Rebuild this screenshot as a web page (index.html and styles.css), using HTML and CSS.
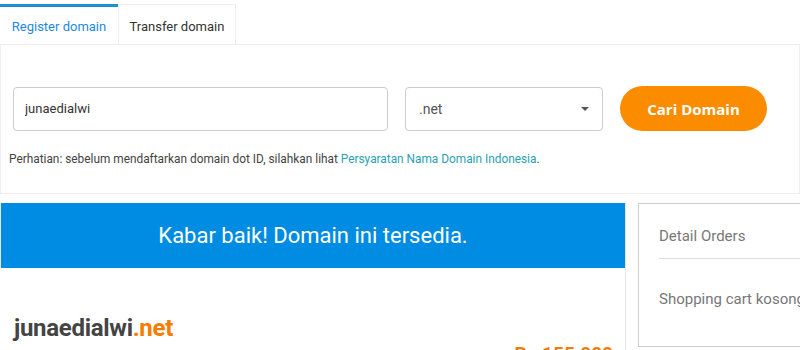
FILE: index.html
```html
<!DOCTYPE html>
<html lang="id">
<head>
    <meta charset="UTF-8">
    <meta name="viewport" content="width=device-width, initial-scale=1.0">
    <title>Cari Domain</title>
    <link rel="stylesheet" href="styles.css">
</head>
<body>
    <div class="tabs">
        <a href="#" class="tab active">Register domain</a>
        <a href="#" class="tab">Transfer domain</a>
    </div>
    <div class="search-panel">
        <form class="search-row">
            <input type="text" class="domain-input" value="junaedialwi">
            <div class="tld-select">
                <span>.net</span>
                <span class="caret"></span>
            </div>
            <button type="button" class="search-btn">Cari Domain</button>
        </form>
        <p class="note">Perhatian: sebelum mendaftarkan domain dot ID, silahkan lihat <a href="#">Persyaratan Nama Domain Indonesia</a>.</p>
    </div>

    <div class="results">
        <div class="result-main">
            <div class="banner">Kabar baik! Domain ini tersedia.</div>
            <div class="result-body">
                <div class="domain-name">junaedialwi<span class="tld">.net</span></div>
                <div class="price">Rp 155.000</div>
            </div>
        </div>
        <div class="order-card">
            <div class="order-title">Detail Orders</div>
            <div class="order-empty">Shopping cart kosong</div>
        </div>
    </div>
</body>
</html>
```

FILE: styles.css
```css
body { font-family: Roboto, "Liberation Sans", sans-serif; margin: 0; padding: 0; background: #fff; color: #333; }

.tabs {
    display: flex;
    padding-top: 4px;
}
.tab {
    width: 118px;
    height: 40px;
    box-sizing: border-box;
    display: flex;
    align-items: center;
    justify-content: center;
    font-size: 13px;
    color: #333;
    text-decoration: none;
    border: 1px solid #eee;
    border-bottom: none;
    padding-top: 4px;
}
.tab.active {
    color: #1e88e5;
    border: none;
    border-top: 3px solid #1b8fd2;
    padding-top: 2px;
}

.search-panel {
    border: 1px solid #eee;
    padding: 41px 12px 27px 8px;
}
.search-row {
    display: flex;
    align-items: center;
    margin: 0;
}
.domain-input {
    width: 375px;
    height: 44px;
    box-sizing: border-box;
    margin-left: 4px;
    border: 1px solid #ccc;
    border-radius: 4px;
    padding: 0 11px;
    font-family: inherit;
    font-size: 13px;
    color: #333;
}
.tld-select {
    width: 198px;
    height: 44px;
    box-sizing: border-box;
    margin-left: 17px;
    border: 1px solid #ccc;
    border-radius: 4px;
    padding: 0 13px 0 13px;
    display: flex;
    align-items: center;
    justify-content: space-between;
    font-size: 14px;
    color: #555;
}
.caret {
    width: 0;
    height: 0;
    border-left: 4px solid transparent;
    border-right: 4px solid transparent;
    border-top: 4px solid #555;
}
.search-btn {
    margin-left: 17px;
    width: 147px;
    height: 45px;
    border: none;
    border-radius: 23px;
    background-color: #fb8c00;
    color: white;
    font-family: "Open Sans", sans-serif;
    font-size: 15px;
    font-weight: bold;
}
.note {
    margin: 21px 0 0;
    font-size: 11.85px;
    color: #444;
}
.note a { color: #2aa1b3; text-decoration: none; }

.results {
    display: flex;
    margin-top: 9px;
    gap: 12px;
}
.result-main {
    width: 625px;
    border-right: 1px solid #e6e6e6;
    flex-shrink: 0;
}
.banner {
    background-color: #008ce3;
    color: white;
    font-size: 22px;
    height: 65px;
    display: flex;
    align-items: center;
    justify-content: center;
    border-left: 1px solid #e6e6e6;
}
.result-body {
    padding: 46px 12px 0 14px;
}
.domain-name {
    font-size: 24px;
    font-weight: bold;
    color: #444;
    letter-spacing: -0.3px;
}
.domain-name .tld { color: #f57c00; }
.price {
    text-align: right;
    font-size: 19px;
    line-height: 24px;
    font-weight: bold;
    color: #f57c00;
    margin-top: 0;
}

.order-card {
    flex: 1;
    border: 1px solid #ccc;
    border-right: none;
    height: 142px;
    padding: 0 0 0 20px;
    color: #777;
    font-size: 15px;
    white-space: nowrap;
    overflow: hidden;
}
.order-title {
    padding: 23px 0 13px;
    border-bottom: 1px solid #ddd;
}
.order-empty {
    padding-top: 31px;
}
```
